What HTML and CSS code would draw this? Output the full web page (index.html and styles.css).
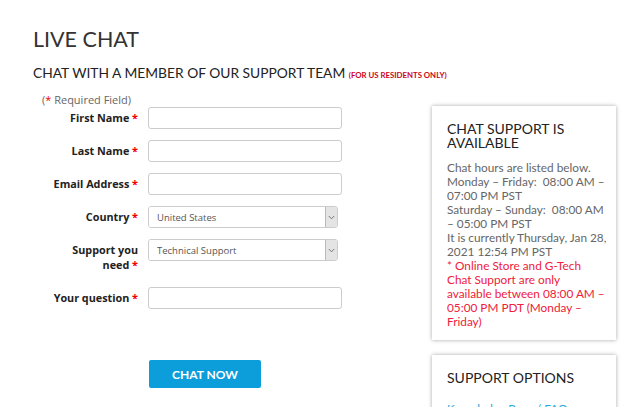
FILE: index.html
```html
<!DOCTYPE html>
<html>
<head>
<meta charset="utf-8">
<link rel="stylesheet" href="styles.css">
</head>
<body>
<div class="page">
  <h1 class="title">LIVE CHAT</h1>
  <h2 class="subtitle">CHAT WITH A MEMBER OF OUR SUPPORT TEAM <span class="note">(FOR US RESIDENTS ONLY)</span></h2>
  <div class="main">
    <form class="form">
      <p class="required">(<span class="star">*</span> Required Field)</p>
      <div class="row">
        <label class="label">First Name <span class="star">*</span></label>
        <input class="field" type="text">
      </div>
      <div class="row">
        <label class="label">Last Name <span class="star">*</span></label>
        <input class="field" type="text">
      </div>
      <div class="row">
        <label class="label">Email Address <span class="star">*</span></label>
        <input class="field" type="text">
      </div>
      <div class="row">
        <label class="label">Country <span class="star">*</span></label>
        <div class="select">
          <select class="select-input"><option>United States</option></select>
          <div class="arrow"><svg width="7" height="5" viewBox="0 0 7 5"><path d="M0.8 1 L3.5 3.8 L6.2 1" fill="none" stroke="#777" stroke-width="1"/></svg></div>
        </div>
      </div>
      <div class="row">
        <label class="label">Support you need <span class="star">*</span></label>
        <div class="select">
          <select class="select-input"><option>Technical Support</option></select>
          <div class="arrow"><svg width="7" height="5" viewBox="0 0 7 5"><path d="M0.8 1 L3.5 3.8 L6.2 1" fill="none" stroke="#777" stroke-width="1"/></svg></div>
        </div>
      </div>
      <div class="row">
        <label class="label">Your question <span class="star">*</span></label>
        <input class="field" type="text">
      </div>
      <div class="actions">
        <button class="btn" type="button">CHAT NOW</button>
      </div>
    </form>
    <aside class="sidebar">
      <div class="box box-hours">
        <h3 class="box-title">CHAT SUPPORT IS AVAILABLE</h3>
        <p class="box-text">Chat hours are listed below.<br>Monday – Friday:&nbsp; 08:00 AM –<br>07:00 PM PST<br>Saturday – Sunday:&nbsp; 08:00 AM<br>– 05:00 PM PST<br>It is currently Thursday, Jan 28,<br>2021 12:54 PM PST</p>
        <p class="box-text warn">* Online Store and G-Tech<br>Chat Support are only<br>available between 08:00 AM –<br>05:00 PM PDT (Monday –<br>Friday)</p>
      </div>
      <div class="box box-options">
        <h3 class="box-title">SUPPORT OPTIONS</h3>
        <a class="box-link" href="#">Knowledge Base / FAQs</a>
      </div>
    </aside>
  </div>
</div>
</body>
</html>
```
FILE: styles.css
```css
html, body {
  margin: 0;
  padding: 0;
  background: #fff;
  overflow: hidden;
}
body {
  font-family: "Open Sans", "Liberation Sans", sans-serif;
  color: #333;
}
.page {
  padding-left: 33px;
}
.title {
  font-family: Lato, sans-serif;
  font-weight: 400;
  font-size: 21.5px;
  line-height: 28px;
  color: #333;
  margin: 0;
  padding-top: 25px;
}
.subtitle {
  font-family: Lato, sans-serif;
  font-weight: 400;
  font-size: 13.8px;
  line-height: 18px;
  color: #222;
  margin: 11px 0 0;
}
.note {
  font-size: 7.8px;
  font-weight: 700;
  color: #d0021b;
}
.main {
  display: flex;
  align-items: flex-start;
}
.form {
  width: 399px;
  margin: 0;
}
.required {
  margin: 8px 0 0 9px;
  font-size: 11px;
  line-height: 15px;
  color: #666;
}
.star {
  color: #e00;
}
.row {
  display: grid;
  grid-template-columns: 88px 194px;
  column-gap: 10px;
  align-items: start;
  padding-left: 17px;
  margin-bottom: 11px;
}
.label {
  text-align: right;
  font-size: 10.8px;
  font-weight: 700;
  line-height: 15px;
  padding: 3px 0 4px;
  color: #222;
}
.field {
  box-sizing: border-box;
  height: 22px;
  width: 194px;
  margin: 0;
  border: 1px solid #ccc;
  border-radius: 3px;
  background: #fff;
}
.select {
  box-sizing: border-box;
  display: flex;
  width: 190px;
  height: 22px;
  border: 1px solid #ccc;
  border-radius: 3px;
  overflow: hidden;
}
.select-input {
  appearance: none;
  -webkit-appearance: none;
  flex: 1;
  border: none;
  background: #fff;
  font-family: "Open Sans", sans-serif;
  font-size: 9.5px;
  color: #555;
  padding: 0 0 0 8px;
  margin: 0;
  outline: none;
}
.arrow {
  width: 11px;
  background: #e4e4e4;
  border-left: 1px solid #bbb;
  display: flex;
  align-items: center;
  justify-content: center;
}
.actions {
  padding: 40px 0 0 116px;
}
.btn {
  width: 112px;
  height: 28px;
  border: none;
  border-radius: 2px;
  background: #0b9edb;
  color: #fff;
  font-family: Lato, sans-serif;
  font-weight: 700;
  font-size: 12px;
  padding: 0;
}
.sidebar {
  width: 184px;
  margin-top: 22px;
  display: flex;
  flex-direction: column;
  gap: 15px;
}
.box {
  background: #fff;
  box-shadow: 0 0 4px rgba(0, 0, 0, 0.35);
  padding: 16px 6px 11px 15px;
}
.box-title {
  font-family: Lato, sans-serif;
  font-weight: 400;
  font-size: 14px;
  line-height: 14px;
  color: #222;
  margin: 0 0 11px;
}
.box-text {
  font-family: Lato, sans-serif;
  font-size: 11.8px;
  line-height: 14px;
  color: #666;
  margin: 0;
  white-space: nowrap;
}
.warn {
  color: #f0203a;
}
.box-options {
  height: 80px;
}
.box-options .box-title {
  margin-bottom: 11px;
}
.box-link {
  font-family: Lato, sans-serif;
  font-size: 11.8px;
  color: #29a8e0;
  text-decoration: none;
}
```
